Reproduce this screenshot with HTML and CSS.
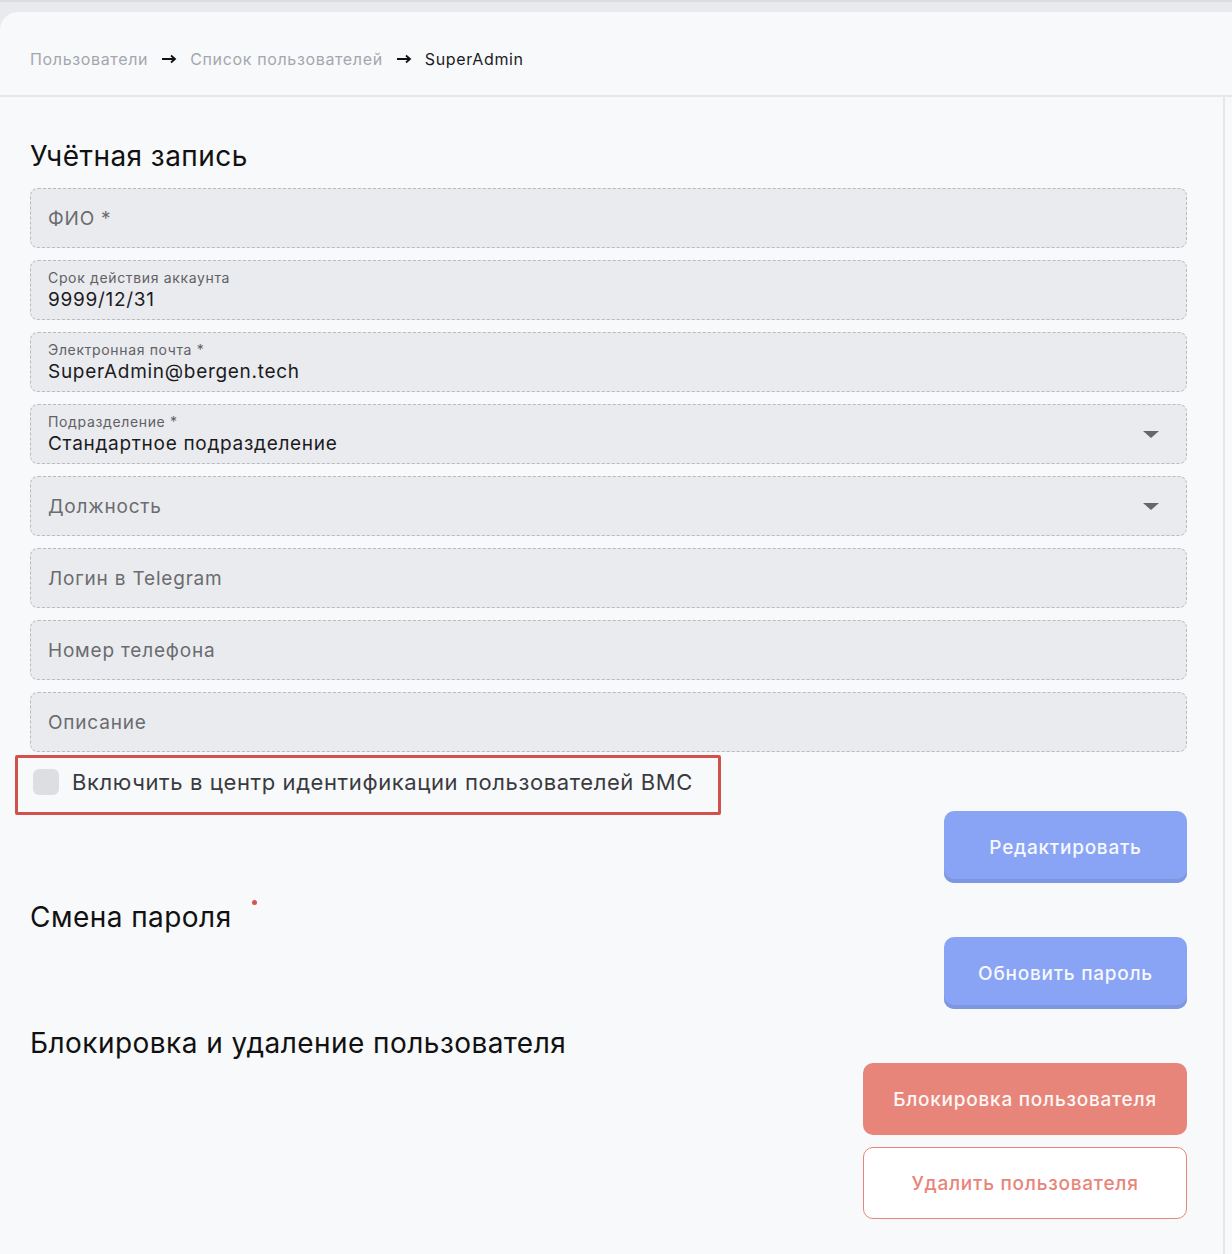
FILE: index.html
```html
<!DOCTYPE html>
<html lang="ru">
<head>
<meta charset="utf-8">
<title>SuperAdmin</title>
<link rel="stylesheet" href="styles.css">
</head>
<body>
<div class="page">
  <header class="crumbs">
    <span class="crumb">Пользователи</span>
    <svg class="arrow" width="15" height="10" viewBox="0 0 15 10"><path d="M0 5H12.5M9 1.5L13 5L9 8.5" fill="none" stroke="#111" stroke-width="1.8"/></svg>
    <span class="crumb">Список пользователей</span>
    <svg class="arrow" width="15" height="10" viewBox="0 0 15 10"><path d="M0 5H12.5M9 1.5L13 5L9 8.5" fill="none" stroke="#111" stroke-width="1.8"/></svg>
    <span class="crumb current">SuperAdmin</span>
  </header>
  <main class="content">
    <section class="section">
      <h2 class="title">Учётная запись</h2>
      <div class="fields">
        <div class="field"><span class="placeholder">ФИО *</span></div>
        <div class="field filled"><span class="label">Срок действия аккаунта</span><span class="value">9999/12/31</span></div>
        <div class="field filled"><span class="label">Электронная почта *</span><span class="value">SuperAdmin@bergen.tech</span></div>
        <div class="field filled select"><span class="label">Подразделение *</span><span class="value">Стандартное подразделение</span><span class="caret"></span></div>
        <div class="field select"><span class="placeholder">Должность</span><span class="caret"></span></div>
        <div class="field"><span class="placeholder">Логин в Telegram</span></div>
        <div class="field"><span class="placeholder">Номер телефона</span></div>
        <div class="field"><span class="placeholder">Описание</span></div>
      </div>
      <label class="check-row">
        <span class="checkbox"></span>
        <span class="check-text">Включить в центр идентификации пользователей BMC</span>
        <span class="highlight"></span>
      </label>
      <div class="actions">
        <button class="btn primary">Редактировать</button>
      </div>
    </section>
    <section class="section">
      <h2 class="title dotted">Смена пароля<span class="dot"></span></h2>
      <div class="actions">
        <button class="btn primary">Обновить пароль</button>
      </div>
    </section>
    <section class="section">
      <h2 class="title">Блокировка и удаление пользователя</h2>
      <div class="actions stack">
        <button class="btn danger">Блокировка пользователя</button>
        <button class="btn outline">Удалить пользователя</button>
      </div>
    </section>
  </main>
</div>
</body>
</html>
```
FILE: styles.css
```css
* { box-sizing: border-box; }
html, body { margin: 0; padding: 0; }
body {
  background: #e9eaee;
  font-family: Inter, "Noto Sans", "Liberation Sans", sans-serif;
  color: #1b1b1f;
  border-top: 2px solid #dcdde1;
}
.page {
  margin-top: 10px;
  background: #f8f9fb;
  border-top-left-radius: 18px;
  min-height: 1242px;
}
.crumbs {
  height: 85px;
  display: flex;
  align-items: center;
  padding: 10px 30px 0;
  border-bottom: 2px solid #e6e7ea;
  font-size: 16px;
  letter-spacing: 0.65px;
}
.crumb { color: #a4a7ad; }
.crumb.current { color: #1b1b1f; }
.arrow { margin: 1px 13px 0 14px; }
.content {
  width: 1225px;
  border-right: 2px solid #e6e7ea;
  padding: 43px 36px 35px 30px;
  min-height: 1155px;
}
.title {
  margin: 0;
  font-weight: 400;
  font-size: 28px;
  line-height: 32px;
  letter-spacing: 0.45px;
  color: #111;
}
.fields {
  margin-top: 16px;
  display: flex;
  flex-direction: column;
  gap: 12px;
}
.field {
  position: relative;
  height: 60px;
  background: #eaebee;
  border: 1px dashed #b9bbbf;
  border-radius: 8px;
  padding: 0 17px;
  display: flex;
  flex-direction: column;
  justify-content: center;
}
.field.filled { padding-top: 2px; }
.placeholder { font-size: 19px; color: #6a6c70; letter-spacing: 0.8px; }
.label { font-size: 14px; color: #5f6166; line-height: 18px; letter-spacing: 0.65px; }
.value { font-size: 19px; color: #1b1b1f; line-height: 26px; letter-spacing: 0.7px; }
.caret {
  position: absolute;
  right: 27px;
  top: 26px;
  width: 0; height: 0;
  border-left: 8px solid transparent;
  border-right: 8px solid transparent;
  border-top: 7px solid #65676b;
}
.check-row {
  position: relative;
  display: flex;
  align-items: center;
  gap: 13px;
  height: 36px;
  margin-top: 12px;
  padding-left: 3px;
}
.checkbox {
  width: 26px; height: 26px;
  border-radius: 6px;
  background: #dcdee2;
}
.check-text { font-size: 22px; color: #3a3b3f; letter-spacing: 0.6px; }
.highlight {
  position: absolute;
  left: -15px;
  top: -9px;
  width: 706px;
  height: 60px;
  border: 3px solid #d0524a;
  border-radius: 2px;
  pointer-events: none;
}
.actions {
  display: flex;
  justify-content: flex-end;
  margin-top: 11px;
}
.actions.stack { flex-direction: column; align-items: flex-end; gap: 12px; margin-top: 4px; }
.section + .section .actions { margin-top: 4px; }
.section + .section { margin-top: 18px; }
.title.dotted { position: relative; }
.dot {
  position: absolute;
  left: 222px;
  top: -1px;
  width: 5px; height: 5px;
  border-radius: 50%;
  background: #d9534f;
}
.btn {
  font-family: inherit;
  font-size: 19px;
  font-weight: 500;
  height: 72px;
  border-radius: 10px;
  border: none;
  cursor: pointer;
  letter-spacing: 0.75px;
}
.btn.primary {
  width: 243px;
  background: #8aa4f5;
  color: #f6f8ff;
  box-shadow: inset 0 -4px 0 #7d97e0;
  padding-top: 2px;
}
.btn.danger {
  width: 324px;
  background: #e8857a;
  color: #fff7f5;
}
.btn.outline {
  width: 324px;
  background: #fff;
  border: 1px solid #e8857a;
  color: #e8857a;
}
```
